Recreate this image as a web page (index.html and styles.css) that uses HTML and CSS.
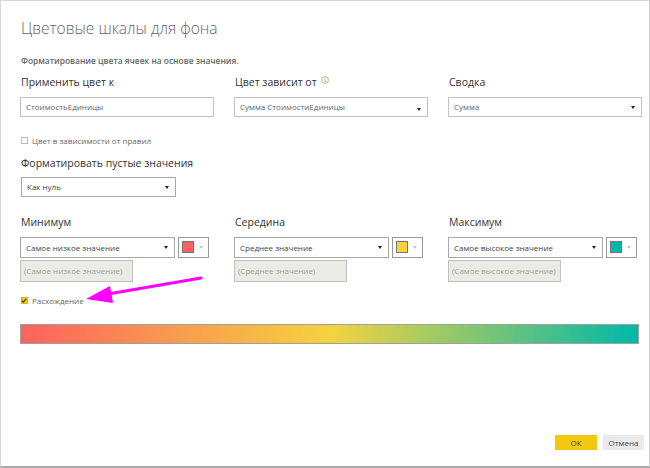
FILE: index.html
```html
<!DOCTYPE html>
<html lang="ru">
<head>
<meta charset="utf-8">
<title>Цветовые шкалы для фона</title>
<link rel="stylesheet" href="styles.css">
</head>
<body>
<div class="dialog">
  <h1 class="title">Цветовые шкалы для фона</h1>
  <p class="subtitle">Форматирование цвета ячеек на основе значения.</p>

  <div class="grid3 top-row">
    <div class="field">
      <div class="label">Применить цвет к</div>
      <div class="box input">СтоимостьЕдиницы</div>
    </div>
    <div class="field">
      <div class="label">Цвет зависит от
        <svg class="info" width="8" height="8" viewBox="0 0 8 8"><circle cx="4" cy="4" r="3.4" fill="none" stroke="#b0a27c" stroke-width="0.8"/><rect x="3.5" y="3.4" width="1" height="2.6" fill="#b0a27c"/><rect x="3.5" y="1.9" width="1" height="0.9" fill="#b0a27c"/></svg>
      </div>
      <div class="box select low-caret">Сумма СтоимостиЕдиницы<span class="caret"></span></div>
    </div>
    <div class="field">
      <div class="label">Сводка</div>
      <div class="box select">Сумма<span class="caret"></span></div>
    </div>
  </div>

  <div class="check rules"><span class="cb"></span>Цвет в зависимости от правил</div>

  <div class="label empty-label">Форматировать пустые значения</div>
  <div class="box select dark empty-select">Как нуль<span class="caret"></span></div>

  <div class="grid3 range-row">
    <div class="field">
      <div class="label">Минимум</div>
      <div class="pick">
        <div class="box select dark">Самое низкое значение<span class="caret"></span></div>
        <div class="swatch"><span class="chip red"></span><span class="caret light"></span></div>
      </div>
      <div class="disabled">(Самое низкое значение)</div>
    </div>
    <div class="field">
      <div class="label">Середина</div>
      <div class="pick">
        <div class="box select dark">Среднее значение<span class="caret"></span></div>
        <div class="swatch"><span class="chip yellow"></span><span class="caret light"></span></div>
      </div>
      <div class="disabled">(Среднее значение)</div>
    </div>
    <div class="field">
      <div class="label">Максимум</div>
      <div class="pick">
        <div class="box select dark">Самое высокое значение<span class="caret"></span></div>
        <div class="swatch"><span class="chip teal"></span><span class="caret light"></span></div>
      </div>
      <div class="disabled">(Самое высокое значение)</div>
    </div>
  </div>

  <div class="check diverge"><span class="cb on"><svg width="7" height="7" viewBox="0 0 7 7"><path d="M1 3.6 L2.8 5.4 L6 1.6" fill="none" stroke="#333" stroke-width="1.3"/></svg></span>Расхождение</div>

  <div class="gradient"></div>

  <div class="buttons">
    <button class="btn ok">ОК</button>
    <button class="btn cancel">Отмена</button>
  </div>

  <svg class="callout" width="650" height="468" viewBox="0 0 650 468">
    <line x1="201" y1="278" x2="108" y2="294" stroke="#ff00ff" stroke-width="3.2" stroke-linecap="round"/>
    <polygon points="86,299 110,286 113,303" fill="#ff00ff"/>
  </svg>
</div>
</body>
</html>
```

FILE: styles.css
```css
* { box-sizing: border-box; }
html, body { margin: 0; padding: 0; background: #fff; }
body {
  width: 650px;
  height: 468px;
  overflow: hidden;
  font-family: "Open Sans", "Noto Sans", sans-serif;
}
.dialog {
  position: relative;
  width: 650px;
  height: 468px;
  border-top: 1px solid #d6d6d6;
  border-left: 1px solid #d6d6d6;
  border-right: 1px solid #cfcfcf;
  border-bottom: 2px solid #a8a8a8;
  padding: 0 0 0 19px;
  display: flex;
  flex-direction: column;
  align-items: flex-start;
}
.title {
  margin: 17px 0 0 1px;
  font-size: 15.6px;
  line-height: 20px;
  font-weight: 300;
  color: #666;
}
.subtitle {
  margin: 17px 0 0 1px;
  font-size: 8.4px;
  line-height: 12px;
  font-weight: 600;
  color: #666;
}
.grid3 {
  display: grid;
  grid-template-columns: 194px 194px 194px;
  column-gap: 20px;
}
.top-row { margin-top: 8px; }
.label {
  font-size: 10.5px;
  line-height: 14px;
  color: #333;
  padding-left: 1px;
  display: flex;
  align-items: center;
  white-space: nowrap;
}
.info { margin-left: 4px; margin-top: -5px; }
.box {
  position: relative;
  height: 20px;
  border: 1px solid #c3c3c3;
  font-size: 8px;
  line-height: 18px;
  padding-left: 5px;
  color: #666;
  white-space: nowrap;
}
.top-row .box { margin-top: 8px; }
.caret {
  position: absolute;
  right: 6px;
  top: 8px;
  width: 0;
  height: 0;
  border-left: 2.5px solid transparent;
  border-right: 2.5px solid transparent;
  border-top: 3.5px solid #222;
}
.low-caret .caret { top: 10px; }
.select.dark { border-color: #a8a8a8; color: #444; }
.check {
  display: flex;
  align-items: center;
  height: 12px;
  font-size: 8px;
  color: #666;
  padding-left: 1px;
}
.cb {
  width: 7px;
  height: 7px;
  border: 1px solid #bcbcbc;
  background: #fff;
  margin-right: 4px;
  display: inline-flex;
}
.cb.on { background: #f2c811; border-color: #e0b800; }
.cb.on svg { margin: -1px 0 0 -1px; }
.rules { margin-top: 17px; }
.empty-label { margin-top: 10px; }
.empty-select { width: 155px; margin-top: 7px; margin-left: 1px; }
.range-row { margin-top: 18px; }
.range-row .label { margin-bottom: 8px; }
.pick { display: flex; gap: 3px; }
.pick .select { width: 155px; height: 21px; line-height: 19px; }
.swatch {
  position: relative;
  width: 31px;
  height: 21px;
  border: 1px solid #999;
  padding: 3px 0 0 3px;
}
.chip { display: block; width: 12px; height: 12px; border: 1px solid #777; }
.chip.red { background: #fd625e; }
.chip.yellow { background: #f5d33f; }
.chip.teal { background: #01b8aa; }
.caret.light { border-top-color: #c4c4c4; right: 5px; top: 8px; }
.disabled {
  margin-top: 2px;
  width: 113px;
  height: 22px;
  border: 1px solid #c0c0bc;
  background: #ebebe6;
  font-size: 8px;
  line-height: 20px;
  padding-left: 3px;
  color: #a2a2a2;
  white-space: nowrap;
}
.diverge { margin-top: 12px; }
.gradient {
  margin-top: 18px;
  width: 619px;
  height: 20px;
  border: 1px solid #a0a0a0;
  background: linear-gradient(to right, #fd625e 0%, #f5d33f 50%, #01b8aa 100%);
}
.buttons {
  margin-top: auto;
  margin-bottom: 16px;
  align-self: flex-end;
  margin-right: 5px;
  display: flex;
  gap: 6px;
}
.btn {
  height: 15px;
  border: none;
  font-family: "Open Sans", "Noto Sans", sans-serif;
  font-size: 8px;
  line-height: 15px;
  padding: 0;
  color: #444;
}
.ok { width: 42px; background: #f2c811; }
.cancel { width: 41px; background: #eaeaea; }
.callout {
  position: absolute;
  left: -1px;
  top: -1px;
  pointer-events: none;
}
```
